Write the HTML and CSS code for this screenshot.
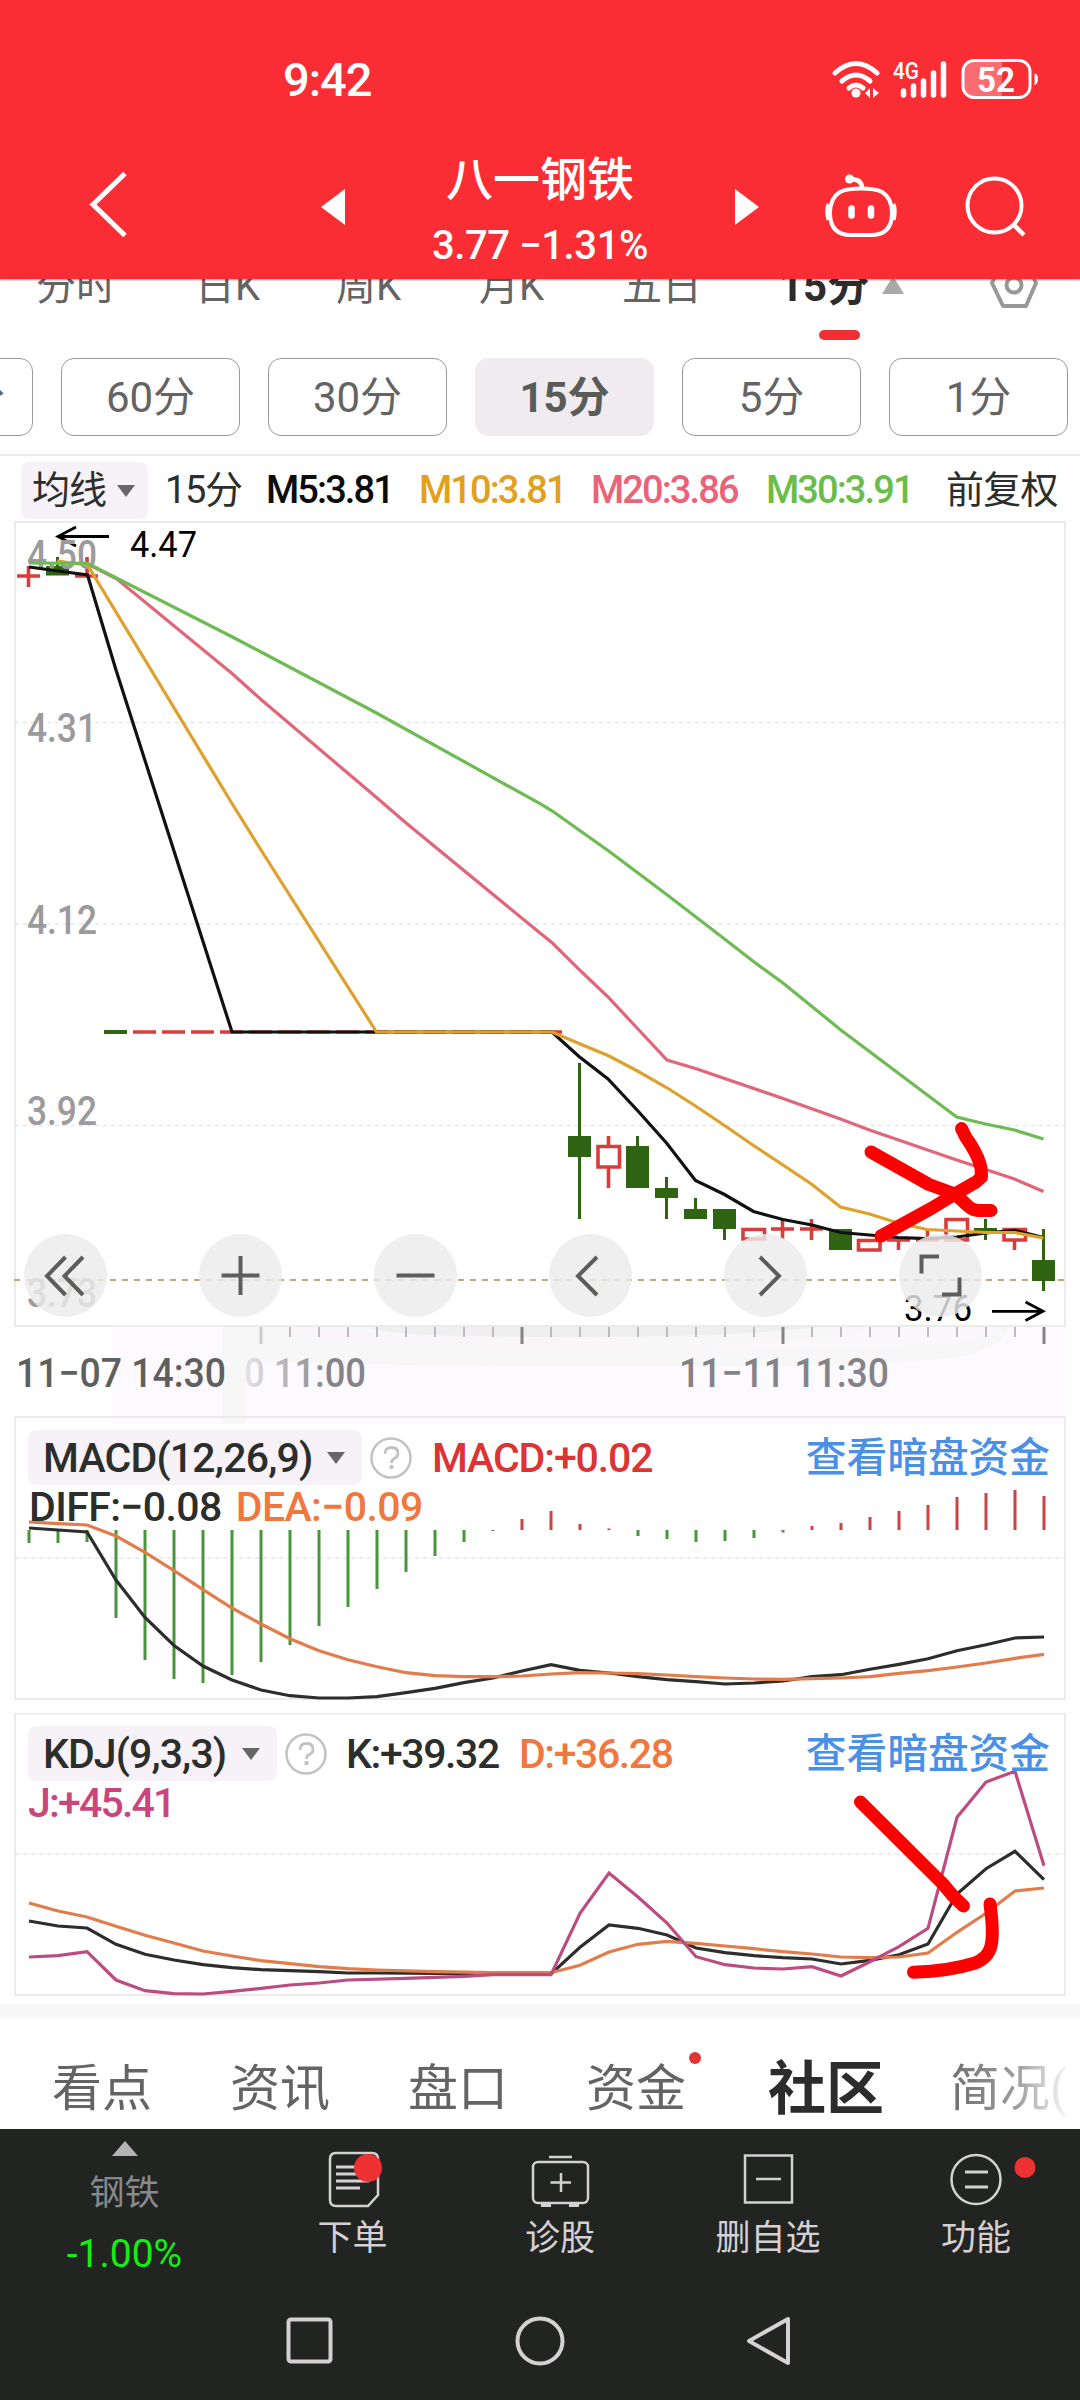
FILE: index.html
```html
<!DOCTYPE html>
<html lang="zh-CN">
<head>
<meta charset="utf-8">
<title>八一钢铁 3.77</title>
<link rel="stylesheet" href="styles.css">
</head>
<body>
<header class="header">
  <div class="status">
    <span class="clock">9:42</span>
    <svg class="status-icons" viewBox="825 50 220 60" width="220" height="60">
      <g fill="none" stroke="#fff" stroke-width="5" stroke-linecap="round">
        <path d="M835 73Q856 54 877 73M842 81Q856 69 870 81M849 88Q856 82 863 88"/>
      </g>
      <circle cx="856" cy="93" r="4.5" fill="#fff"/>
      <path d="M870 88v10l-5-5zM873 88v10l6-5z" fill="#fff"/>
      <text class="net" x="893" y="79" textLength="26" lengthAdjust="spacingAndGlyphs">4G</text>
      <path d="M903.500 91V95M913.500 86V95M923.500 81V95M933.500 73V95M943.500 64V95" stroke="#fff" stroke-width="5.500" stroke-linecap="round"/>
      <path d="M974 61H1002V97H974Q964 97 964 87V71Q964 61 974 61Z" fill="#fff" opacity=".3"/>
      <rect x="963" y="60.500" width="67" height="37" rx="11" fill="none" stroke="#fff" stroke-width="3"/>
      <path d="M1034.500 73.500Q1038 74 1038 79T1034.500 85Z" fill="#fff"/>
      <text class="battery" x="977" y="91.500" textLength="38" lengthAdjust="spacingAndGlyphs">52</text>
    </svg>
  </div>
  <div class="titlebar">
    <svg class="tb-icon" viewBox="80 165 60 80" width="60" height="80"><path d="M125 173.500L93 204.500L125 235.500" fill="none" stroke="#fff" stroke-width="5"/></svg>
    <svg class="tb-icon" viewBox="315 180 35 55" width="35" height="55"><path d="M345 189V225L321 207Z" fill="#fff"/></svg>
    <div class="stock">
      <div class="stock-name">八一钢铁</div>
      <div class="stock-price">3.77 −1.31%</div>
    </div>
    <svg class="tb-icon" viewBox="730 180 35 55" width="35" height="55"><path d="M735 189V225L759 207Z" fill="#fff"/></svg>
    <svg class="tb-icon" viewBox="820 170 80 70" width="80" height="70">
      <g fill="none" stroke="#fff" stroke-width="4">
        <path d="M861 188.500Q875 188.500 882 192Q892 198 892 213Q892 235 871 235H851Q830 235 830 213Q830 198 840 192Q847 188.500 861 188.500Z"/>
        <path d="M828.500 204Q826 211 828.500 220M893.500 204Q896 211 893.500 220"/>
        <path d="M862 188Q862 179 850 179" stroke-width="4.500"/>
        <path d="M851.500 208.500V215.500M871 208.500V215.500" stroke-width="6.500" stroke-linecap="round"/>
      </g>
      <circle cx="849.500" cy="179" r="4.500" fill="#fff"/>
    </svg>
    <svg class="tb-icon" viewBox="960 170 70 70" width="70" height="70">
      <g fill="none" stroke="#fff" stroke-width="4"><circle cx="994.500" cy="205.500" r="27"/><path d="M1013 224L1024 235" stroke-width="4.500"/></g>
    </svg>
  </div>
</header>

<nav class="periods">
  <span>分时</span><span>日K</span><span>周K</span><span>月K</span><span>五日</span>
  <span class="active">15分</span>
  <svg viewBox="882 256 22 60" width="22" height="60"><path d="M893 276L904 294H882Z" fill="#aaa8ab"/></svg>
  <svg viewBox="988 256 52 60" width="52" height="60"><path d="M1003 260H1026L1036 283L1026 306H1003L992 283Z" fill="none" stroke="#98989a" stroke-width="4" stroke-linejoin="round"/><circle cx="1014" cy="285" r="7.500" fill="none" stroke="#98989a" stroke-width="4"/></svg>
</nav>
<div class="underline"></div>

<div class="chips">
  <span class="chip first">120分</span><span class="chip">60分</span><span class="chip">30分</span><span class="chip on">15分</span><span class="chip">5分</span><span class="chip">1分</span>
</div>

<div class="averages">
  <span class="pick">均线<i class="caret"></i></span>
  <span>15分</span>
  <span class="c-black">M5:3.81</span>
  <span class="c-gold">M10:3.81</span>
  <span class="c-pink">M20:3.86</span>
  <span class="c-green">M30:3.91</span>
  <span class="adjust">前复权</span>
</div>

<section class="panel price">
  <svg class="plot" viewBox="0 521 1080 806" width="1080" height="806">
    <rect class="frame" x="15" y="522" width="1050" height="804"/>
    <path class="grid" d="M15 722.500H1065M15 924H1065M15 1125.500H1065"/>
    <path d="M14 1280H1065" stroke="#b9ab80" stroke-width="2" stroke-dasharray="6 6"/>
    <g class="candle-up">
      <path d="M17 576H40M28.500 566V587M75 576H98M87 557V576"/>
      <path d="M133 1032H156M162 1032H185M191 1032H214M220 1032H243M249 1032H272M278 1032H301M307 1032H330M336 1032H359M365 1032H388M394 1032H417M423 1032H446M452 1032H475M481 1032H504M510 1032H533M539 1032H562"/>
      <path d="M608.500 1136V1146M608.500 1168V1188M598 1146.500H619.500V1167H598Z"/>
      <path d="M743 1229.500H764.500V1239H743ZM771 1229H794M782.500 1219V1239M800 1229H823M811.500 1219V1240"/>
      <path d="M858.500 1240.500H880V1250H858.500ZM887 1240H910M898.500 1240V1250M916 1240H939M927.500 1229V1240"/>
      <path d="M946 1219.500H967.500V1240H946ZM1004 1229.500H1025.500V1240H1004ZM1014.500 1240V1250"/>
    </g>
    <g class="candle-down">
      <path d="M46 566H69V575.500H46ZM104 1030H127V1034H104ZM568 1136H591V1157H568ZM626 1146H649V1188H626ZM655 1188H678V1198H655ZM684 1209H707V1219H684ZM713 1209H736V1229H713ZM829 1229H852V1250H829ZM974 1228H997V1231H974ZM1032 1260H1055V1281H1032Z"/>
      <path d="M57.500 557V570M579.500 1063V1219M637.500 1136V1150M666.500 1177V1219M695.500 1198V1212M724.500 1220V1240M985.500 1219V1240M1043.500 1229V1291" stroke="#2f6512" stroke-width="3"/>
    </g>
    <text class="lbl black" x="130" y="557" textLength="67" lengthAdjust="spacingAndGlyphs">4.47</text>
    <path d="M109 536.500H58M76 527L58 536.500L76 546" fill="none" stroke="#000" stroke-width="2.800"/>
    <g class="scale">
      <text x="27" y="569" textLength="70" lengthAdjust="spacingAndGlyphs">4.50</text>
      <text x="27" y="741.500" textLength="70" lengthAdjust="spacingAndGlyphs">4.31</text>
      <text x="27" y="933.500" textLength="70" lengthAdjust="spacingAndGlyphs">4.12</text>
      <text x="27" y="1124.500" textLength="70" lengthAdjust="spacingAndGlyphs">3.92</text>
      <text x="27" y="1307" textLength="70" lengthAdjust="spacingAndGlyphs">3.73</text>
    </g>
    <g class="line">
      <polyline stroke="#111" points="29,567 58,571 87.500,575 116,670 232,1032 552,1032 579,1056.500 608,1079 637.500,1110.500 666.500,1143 695.500,1180.500 724.500,1194.500 753.500,1211.500 783,1219.500 812,1225 840.500,1232.500 869.500,1235 898,1237.500 927,1238.700 956.700,1237 985.600,1233 1014.500,1230.400 1043.500,1237.600"/>
      <polyline stroke="#e0667a" points="87.500,564 117,579 232,673.500 261,699.500 376.500,797.500 405.500,822.500 540,933 552.400,943 579,969.400 608,997 637.500,1028.500 667,1060 695.500,1068.500 783,1098.500 840.500,1119 869.500,1130 956.700,1160 1014.500,1179 1043.500,1191.500"/>
      <polyline stroke="#dda12c" points="57,561 87.500,565 232,803.500 261,850 376.500,1032 552,1032 579,1043.500 608,1055.500 637.500,1071 666.500,1087.500 695.500,1106 724.500,1125.500 753.500,1145.500 783,1165 812,1184.500 840.500,1207 869.500,1214 898,1223 927,1229.500 956.700,1231 985.600,1232.500 1014.500,1232.500 1043.500,1238"/>
      <polyline stroke="#6dbb52" points="29,563 87.500,563.400 116.500,578 232,636.700 261,652 376.500,713 540,803.700 552.400,811 579,830 608,850.500 667,894.700 724.500,939 753.500,961.500 783,983 840.500,1029.700 927,1094.700 956.700,1117 985.600,1124 1014.500,1130 1043.500,1139"/>
    </g>
    <text class="lbl black" x="904" y="1320.500" textLength="68" lengthAdjust="spacingAndGlyphs">3.76</text>
    <path d="M992 1311.300H1043M1025.500 1302L1043 1311.300L1025.500 1320.500" fill="none" stroke="#000" stroke-width="2.800"/>
    <g class="marker">
      <path d="M871 1152L929 1184.500L955 1194L968 1206Q972 1210 978 1210.500L991 1210.500"/>
      <path d="M961.500 1128.500Q965 1137 971 1145Q979 1158 981 1168L981.500 1177L976 1182L955 1194L932 1208L881 1236"/>
    </g>
  </svg>
  <div class="tools">
    <svg class="tool" viewBox="-41.500 -41.500 83 83"><path d="M0 -18.500L-18.500 0.500L0 19.500M17.500 -18.500L-1 0.500L17.500 19.500"/></svg>
    <svg class="tool" viewBox="-41.500 -41.500 83 83"><path d="M-19 0H19M0 -19.500V19.500"/></svg>
    <svg class="tool" viewBox="-41.500 -41.500 83 83"><path d="M-19 0H19"/></svg>
    <svg class="tool" viewBox="-41.500 -41.500 83 83"><path d="M6.500 -18.500L-12.500 0.500L6.500 19.500"/></svg>
    <svg class="tool" viewBox="-41.500 -41.500 83 83"><path d="M-5.500 -18.500L13.500 0.500L-5.500 19.500"/></svg>
    <svg class="tool" viewBox="-41.500 -41.500 83 83"><path d="M-1.500 -19H-19V-2M19 2V19H1.500"/></svg>
  </div>
</section>

<svg class="axis" viewBox="0 1327 1080 89" width="1080" height="89">
  <defs>
    <linearGradient id="fade" gradientUnits="userSpaceOnUse" x1="246" x2="330" y1="0" y2="0"><stop offset="0" stop-color="#e4e2e5"/><stop offset="1" stop-color="#858387"/></linearGradient>
    <linearGradient id="soft" x1="0" x2="1" y1="0" y2="0"><stop offset="0" stop-color="#f8f4f8"/><stop offset="1" stop-color="#fbf8fc"/></linearGradient>
  </defs>
  <path d="M112 1327H1065V1424H112Z" fill="#fdfaff"/>
  <path d="M222 1327H1010Q1000 1355 930 1360T800 1366H540Q380 1366 246 1361V1424H222Z" fill="#f7f7f7"/>
  <path d="M290 1327Q420 1340 560 1340H780Q840 1338 880 1327H1005Q985 1345 850 1350H560Q400 1350 285 1332Z" fill="url(#soft)"/>
  <path d="M370 1327H820Q740 1337 560 1337T370 1327Z" fill="#efefef"/>
  <path d="M290 1327v10M319 1327v10M348 1327v10M377 1327v10M406 1327v10M435 1327v10M464 1327v10M493 1327v10M551 1327v10M580 1327v10M609 1327v10M638 1327v10M667 1327v10M696 1327v10M725 1327v10M754 1327v10M812 1327v10M841 1327v10M870 1327v10M899 1327v10M928 1327v10M957 1327v10M986 1327v10M1015 1327v10" stroke="#bdbbbd" stroke-width="2"/>
  <path d="M522 1327v17M783 1327v17M1044 1327v17" stroke="#858385" stroke-width="3"/>
  <path d="M261 1327v17" stroke="#ccc" stroke-width="3"/>
  <text x="16" y="1387" textLength="210" lengthAdjust="spacingAndGlyphs" fill="#5f605e">11−07 14:30</text>
  <text x="244" y="1387" textLength="122" lengthAdjust="spacingAndGlyphs" fill="url(#fade)">0 11:00</text>
  <text x="679" y="1387" textLength="210" lengthAdjust="spacingAndGlyphs" fill="#858387">11−11 11:30</text>
</svg>

<section class="panel indicator">
  <svg class="plot" viewBox="0 1416 1080 297" width="1080" height="297">
    <path d="M112 1416H1065V1424H112Z" fill="#fdfaff"/>
    <path d="M222 1416H246V1424H222Z" fill="#f7f7f7"/>
    <rect class="frame" x="15" y="1417" width="1050" height="282"/>
    <path class="grid" d="M15 1558H1065"/>
    <path stroke="#48963c" stroke-width="3" d="M29 1530V1543M58 1530V1543M87 1530V1542M116 1530V1618M145 1530V1660M174 1530V1679M203 1530V1683M232 1530V1675M261 1530V1662M290 1530V1645M319 1530V1626M348 1530V1607M377 1530V1589M406 1530V1572M435 1530V1556M464 1530V1542M493 1530V1531M638 1530V1536M667 1530V1539M696 1530V1542M725 1530V1541M754 1530V1538M783 1530V1532.500"/>
    <path stroke="#cb4444" stroke-width="3" d="M522 1530V1519M551 1530V1511M580 1530V1524M609 1530V1528.500M812 1530V1526M841 1530V1523M870 1530V1517M899 1530V1511M928 1530V1505M957 1530V1497M986 1530V1493M1015 1530V1490M1044 1530V1496"/>
    <g class="line">
      <polyline stroke="#2c2e2c" points="29,1528 58,1530 87,1532 116,1580 145,1617.500 174,1645.500 203,1666 232,1680 261,1690 290,1695.700 319,1698 348,1698 377,1696.700 406,1692.700 435,1688.300 464,1682.700 493,1678 522,1671 551,1664.700 580,1670.300 609,1673 638,1676.700 667,1679.700 696,1681.700 725,1684 754,1683 783,1681 812,1676.700 841,1674.700 870,1669.300 899,1664.300 928,1658.700 957,1650.700 986,1644.700 1015,1638 1044,1637"/>
      <polyline stroke="#e27c4c" points="29,1522 58,1523.700 87,1525 116,1536 145,1552.300 174,1570.700 203,1589.700 232,1608 261,1624 290,1638.700 319,1650.700 348,1659.700 377,1666.700 406,1672.700 435,1675.700 464,1676.700 493,1676.700 522,1676 551,1674 580,1672.700 609,1673 638,1673.700 667,1675 696,1676.700 725,1678 754,1679 783,1679.300 812,1678.700 841,1678 870,1676.700 899,1673.300 928,1670.700 957,1667 986,1663 1015,1658.300 1044,1654.300"/>
    </g>
  </svg>
  <div class="legend">
    <div class="legend-row">
      <span class="pick wide">MACD(12,26,9)<i class="caret"></i></span>
      <svg class="help" viewBox="0 0 44 44" width="44" height="44"><circle cx="22" cy="22" r="19.500" fill="none" stroke="#c2c2c2" stroke-width="2.500"/><path d="M16 18Q16 11.500 22.500 11.500T29 17.500Q29 21 24.500 23Q22.500 24 22.500 27" fill="none" stroke="#c2c2c2" stroke-width="2.800"/><circle cx="22.500" cy="31" r="2.200" fill="#c2c2c2"/></svg>
      <span class="c-red macd-value">MACD:+0.02</span>
      <a class="link">查看暗盘资金</a>
    </div>
    <div class="legend-row second"><span>DIFF:−0.08</span><span class="c-orange">DEA:−0.09</span></div>
  </div>
</section>

<section class="panel indicator kdj">
  <svg class="plot" viewBox="0 1713 1080 291" width="1080" height="291">
    <rect class="frame" x="15" y="1713.500" width="1050" height="281.500"/>
    <path class="grid" d="M15 1854H1065"/>
    <g class="line">
      <polyline stroke="#2c2e2c" points="29,1921 58,1926 87,1928 116,1944.300 145,1954.300 174,1960 203,1964.700 232,1967.700 261,1969.700 290,1970.700 319,1971.700 348,1973 377,1973 435,1973.500 551,1974 580,1947.300 609,1925 638,1928.300 667,1935 696,1948 725,1952.700 754,1955.700 783,1957.700 812,1959 841,1964 870,1960.300 899,1954.700 928,1944 957,1894 986,1868.700 1015,1851.300 1044,1879.700"/>
      <polyline stroke="#e27c4c" points="29,1903 58,1911 87,1917 116,1926.300 145,1935.300 174,1943 203,1951 232,1956 261,1960.700 290,1963.700 319,1966.700 348,1968.700 377,1970 435,1971.700 493,1972.700 551,1972.700 580,1965.300 609,1952 638,1944.300 667,1941.300 696,1943.300 725,1946 754,1948.700 783,1951.700 812,1954 841,1957 870,1957.700 899,1957 928,1953 957,1932.300 986,1913.300 1015,1891 1044,1888"/>
      <polyline stroke="#bc4c80" points="29,1957 58,1955.700 87,1951.700 116,1980 145,1990.700 174,1993.700 203,1994 232,1991.300 261,1988.300 290,1985 319,1983 348,1980 406,1978.300 464,1976.300 493,1974.700 551,1974.700 580,1913.300 609,1873 638,1897 667,1923 696,1956.700 725,1964.700 754,1968 783,1969 812,1966.700 841,1976 870,1961.700 899,1946.700 928,1928.300 957,1817.300 986,1782 1015,1771.300 1044,1865.700"/>
    </g>
    <g class="marker">
      <path d="M860.500 1802L943 1884L953 1896L963.500 1906"/>
      <path d="M990 1904Q994 1933 991 1946Q988 1958 975 1963Q950 1971 913.500 1972.300"/>
    </g>
  </svg>
  <div class="legend">
    <div class="legend-row">
      <span class="pick short">KDJ(9,3,3)<i class="caret"></i></span>
      <svg class="help" viewBox="0 0 44 44" width="44" height="44"><circle cx="22" cy="22" r="19.500" fill="none" stroke="#c2c2c2" stroke-width="2.500"/><path d="M16 18Q16 11.500 22.500 11.500T29 17.500Q29 21 24.500 23Q22.500 24 22.500 27" fill="none" stroke="#c2c2c2" stroke-width="2.800"/><circle cx="22.500" cy="31" r="2.200" fill="#c2c2c2"/></svg>
      <span class="k-value">K:+39.32</span>
      <span class="c-orange">D:+36.28</span>
      <a class="link">查看暗盘资金</a>
    </div>
    <div class="legend-row second j-row"><span class="c-magenta">J:+45.41</span></div>
  </div>
</section>

<nav class="sections">
  <span>看点</span><span>资讯</span><span>盘口</span><span class="dotted">资金</span><span class="current">社区</span><span class="fading">简况(</span>
</nav>

<footer class="footer">
  <div class="actions">
    <div class="sector"><i class="up"></i><span>钢铁</span><b>-1.00%</b></div>
    <div class="action">
      <svg viewBox="316 2145 72 68" width="72" height="68"><path d="M335 2153H371Q377 2153 377 2159V2195L367 2206H335Q329 2206 329 2200V2159Q329 2153 335 2153Z" fill="none" stroke="#d4d0d4" stroke-width="2.500"/><path d="M335 2167H360M335 2174H365M335 2181H368M335 2188H359" stroke="#d4d0d4" stroke-width="2.800"/><circle cx="367" cy="2168" r="14" fill="#ee3132"/></svg>
      <span>下单</span>
    </div>
    <div class="action">
      <svg viewBox="523 2145 72 68" width="72" height="68"><g fill="none" stroke="#d4d0d4" stroke-width="2.500"><rect x="532" y="2162" width="55" height="41" rx="5"/><path d="M548 2157H571M560 2173V2192M549.500 2182.500H570"/><path d="M540 2205H550M568 2205H578" stroke-width="4"/></g></svg>
      <span>诊股</span>
    </div>
    <div class="action">
      <svg viewBox="731 2145 72 68" width="72" height="68"><path d="M744 2155.500H791V2202.500H744ZM755 2179H780" fill="none" stroke="#d4d0d4" stroke-width="2.500"/></svg>
      <span>删自选</span>
    </div>
    <div class="action">
      <svg viewBox="939 2145 110 68" width="110" height="68" class="more"><circle cx="975" cy="2179.500" r="24.500" fill="none" stroke="#d4d0d4" stroke-width="2.500"/><path d="M964 2172H987M964 2187H987" stroke="#d4d0d4" stroke-width="3"/><circle cx="1024" cy="2167.500" r="10.500" fill="#ee3132"/></svg>
      <span>功能</span>
    </div>
  </div>
  <div class="system">
    <svg viewBox="0 0 60 60" width="60" height="60"><rect x="8.500" y="8.500" width="42" height="42" rx="2.500"/></svg>
    <svg viewBox="0 0 60 60" width="60" height="60"><circle cx="30" cy="30" r="22.500"/></svg>
    <svg viewBox="0 0 60 60" width="60" height="60"><path d="M48 8V52L9 30Z" stroke-linejoin="round"/></svg>
  </div>
</footer>
</body>
</html>
```
FILE: styles.css
```css
* { box-sizing: border-box; }
body {
  margin: 0;
  width: 1080px;
  background: #fff;
  color: #2c2e2c;
  font-family: Roboto, "Noto Sans CJK SC", sans-serif;
  overflow: hidden;
}
svg { display: block; flex: none; }
svg text { font-family: Roboto, sans-serif; font-size: 40px; }
i, b { font-style: normal; font-weight: inherit; }

.header {
  position: relative;
  z-index: 1;
  height: 279px;
  padding-top: 50px;
  background: #fa2d34;
  color: #fff;
  box-shadow: 0 1px 2px rgba(90, 0, 0, .4);
}
.status { display: flex; height: 60px; padding-left: 283px; }
.clock { width: 542px; font-size: 47px; line-height: 60px; font-weight: 500; letter-spacing: -1px; }
.status text { fill: #fff; }
.status .net { font-size: 24px; font-weight: 500; }
.status .battery { font-size: 35px; font-weight: 700; }
.titlebar {
  display: grid;
  grid-template-columns: 80px 235px 85px 330px 90px 140px 70px;
  height: 169px;
}
.tb-icon:nth-child(1) { grid-column: 2; margin-top: 55px; }
.tb-icon:nth-child(2) { grid-column: 3; margin-top: 70px; }
.tb-icon:nth-child(4) { grid-column: 5; margin-top: 70px; }
.tb-icon:nth-child(5) { grid-column: 6; margin-top: 60px; }
.tb-icon:nth-child(6) { grid-column: 7; margin-top: 60px; }
.stock { width: 280px; padding-top: 36px; text-align: center; white-space: nowrap; }
.stock-name { font-size: 47px; line-height: 68px; font-weight: 500; }
.stock-price { margin-top: 2px; font-size: 40px; line-height: 60px; font-weight: 500; letter-spacing: -.4px; }

.periods {
  display: grid;
  grid-template-columns: 159px 141px 143px 143px 157px 103px 106px 60px;
  height: 60px;
  margin-top: -23px;
  padding-left: 36px;
  font-size: 40px;
  line-height: 62px;
  color: #646464;
  white-space: nowrap;
}
.periods .active { font-size: 42px; font-weight: 700; color: #2c2c2c; }
.underline { width: 41px; height: 10px; margin: 14px 0 0 819px; border-radius: 5px; background: #ee3132; }

.chips { display: flex; gap: 28px; width: 1240px; margin: 18px 0 0 -146px; }
.chip {
  width: 179px;
  height: 78px;
  padding-top: 2px;
  border: 1.5px solid #999;
  border-radius: 13px;
  font-size: 42px;
  line-height: 74px;
  text-align: center;
  color: #646464;
}
.chip.on { border-color: #efebef; background: #efebef; color: #5a5c5a; font-weight: 700; }
.chip.first { padding-right: 27px; text-align: right; }

.averages {
  display: grid;
  grid-template-columns: 144px 101px 153px 172px 175px 180px 120px;
  align-items: center;
  height: 67px;
  margin-top: 18px;
  padding: 4px 0 4px 21px;
  border-top: 2px solid #ebebeb;
  font-size: 38px;
  line-height: 61px;
  font-weight: 500;
  letter-spacing: -1.9px;
  white-space: nowrap;
}
.averages > span:nth-child(2) { font-weight: 400; letter-spacing: -1.4px; }
.averages .adjust { font-weight: 400; letter-spacing: -.7px; }
.pick {
  display: flex;
  align-items: center;
  justify-content: space-between;
  width: 127px;
  height: 57px;
  padding: 0 13px 0 11px;
  border-radius: 8px;
  background: #f6f2f7;
  font-weight: 400;
  letter-spacing: -1px;
}
.caret { border: 9px solid transparent; border-top: 12px solid #666; border-bottom: 0; }
.c-black { color: #0c0c0c; }
.c-gold { color: #e2a01c; }
.c-pink { color: #ea6378; }
.c-green { color: #69be48; }
.c-red { color: #dc3434; }
.c-orange { color: #f0783f; }
.c-magenta { color: #cc447c; }

.panel { display: grid; }
.panel > * { grid-area: 1 / 1; }
.price { height: 806px; }
.frame { fill: none; stroke: #ebebeb; stroke-width: 2; }
.grid { stroke: #e6e6e6; stroke-width: 1.5; stroke-dasharray: 4 4; }
.line { fill: none; stroke-width: 3.2; }
.candle-up { fill: none; stroke: #d93c3c; stroke-width: 3.6; }
.candle-down { fill: #2f6512; }
.scale { fill: #9c9a9d; font-weight: 500; }
.black { fill: #000; }
svg .lbl { font-size: 36px; }
.marker { fill: none; stroke: #f00; stroke-width: 13; stroke-linecap: round; stroke-linejoin: round; }
.tools { display: flex; gap: 92px; align-self: end; padding: 0 0 10px 24px; }
.tool {
  width: 83px;
  height: 83px;
  border-radius: 50%;
  background: rgba(235, 235, 235, .82);
  fill: none;
  stroke: #5c5e5c;
  stroke-width: 4;
}
.axis text { font-weight: 500; }

.indicator { height: 297px; }
.legend { padding: 14px 0 0 28px; font-size: 41px; font-weight: 500; white-space: nowrap; }
.legend-row { display: flex; align-items: center; height: 55px; line-height: 58px; letter-spacing: -1.1px; }
.legend-row.second { height: 48px; line-height: 44px; padding-left: 1px; gap: 14px; align-items: flex-start; letter-spacing: -.6px; }
.legend-row.j-row { padding-left: 0; letter-spacing: -1.8px; }
.legend .pick { height: 55px; padding: 0 17px 0 15px; font-weight: 500; }
.legend .wide { width: 334px; letter-spacing: -.8px; }
.legend .short { width: 249px; letter-spacing: -.9px; }
.help { margin-left: 7px; }
.macd-value { margin-left: 19px; }
.k-value { margin: 0 20px 0 18px; letter-spacing: -1.4px; }
.k-value + .c-orange { letter-spacing: -1.4px; }
.link { margin-left: auto; margin-right: 30px; color: #4a90e6; font-size: 40.7px; letter-spacing: 0; }
.kdj { height: 291px; }
.kdj .legend { padding-top: 13px; }

.sections {
  display: grid;
  grid-template-columns: 178px 178px 178px 182px 182px 130px;
  height: 125px;
  padding-left: 52px;
  border-top: 14px solid #f7f7f7;
  font-size: 50px;
  line-height: 142px;
  color: #646464;
  white-space: nowrap;
  overflow: hidden;
}
.dotted { position: relative; }
.dotted::after {
  content: "";
  position: absolute;
  left: 103px;
  top: 34px;
  width: 12px;
  height: 12px;
  border-radius: 50%;
  background: #e03434;
}
.current { font-size: 58px; font-weight: 700; color: #2c2c2c; }
.fading {
  background: linear-gradient(90deg, #707070, #9a9a9a 50%, #fff 122px);
  -webkit-background-clip: text;
  background-clip: text;
  color: transparent;
}

.footer { height: 271px; background: #212421; color: #d4d0d4; }
.actions { display: grid; grid-template-columns: 249px 207px 208px 208px 208px; height: 182px; font-size: 35px; }
.sector { display: flex; flex-direction: column; align-items: center; padding-top: 12px; color: #868a8e; }
.up { border: 13px solid transparent; border-top: 0; border-bottom: 15px solid #b4b2b5; }
.sector span { margin-top: 12px; line-height: 52px; }
.sector b { margin-top: 11px; font-size: 39px; line-height: 46px; color: #14ee14; }
.action { display: flex; flex-direction: column; align-items: center; padding-top: 16px; }
.action span { line-height: 51px; }
.more { margin-left: 38px; }
.system { display: flex; gap: 170px; padding-left: 280px; }
.system svg { fill: none; stroke: #d4d0d4; stroke-width: 4; }
```
